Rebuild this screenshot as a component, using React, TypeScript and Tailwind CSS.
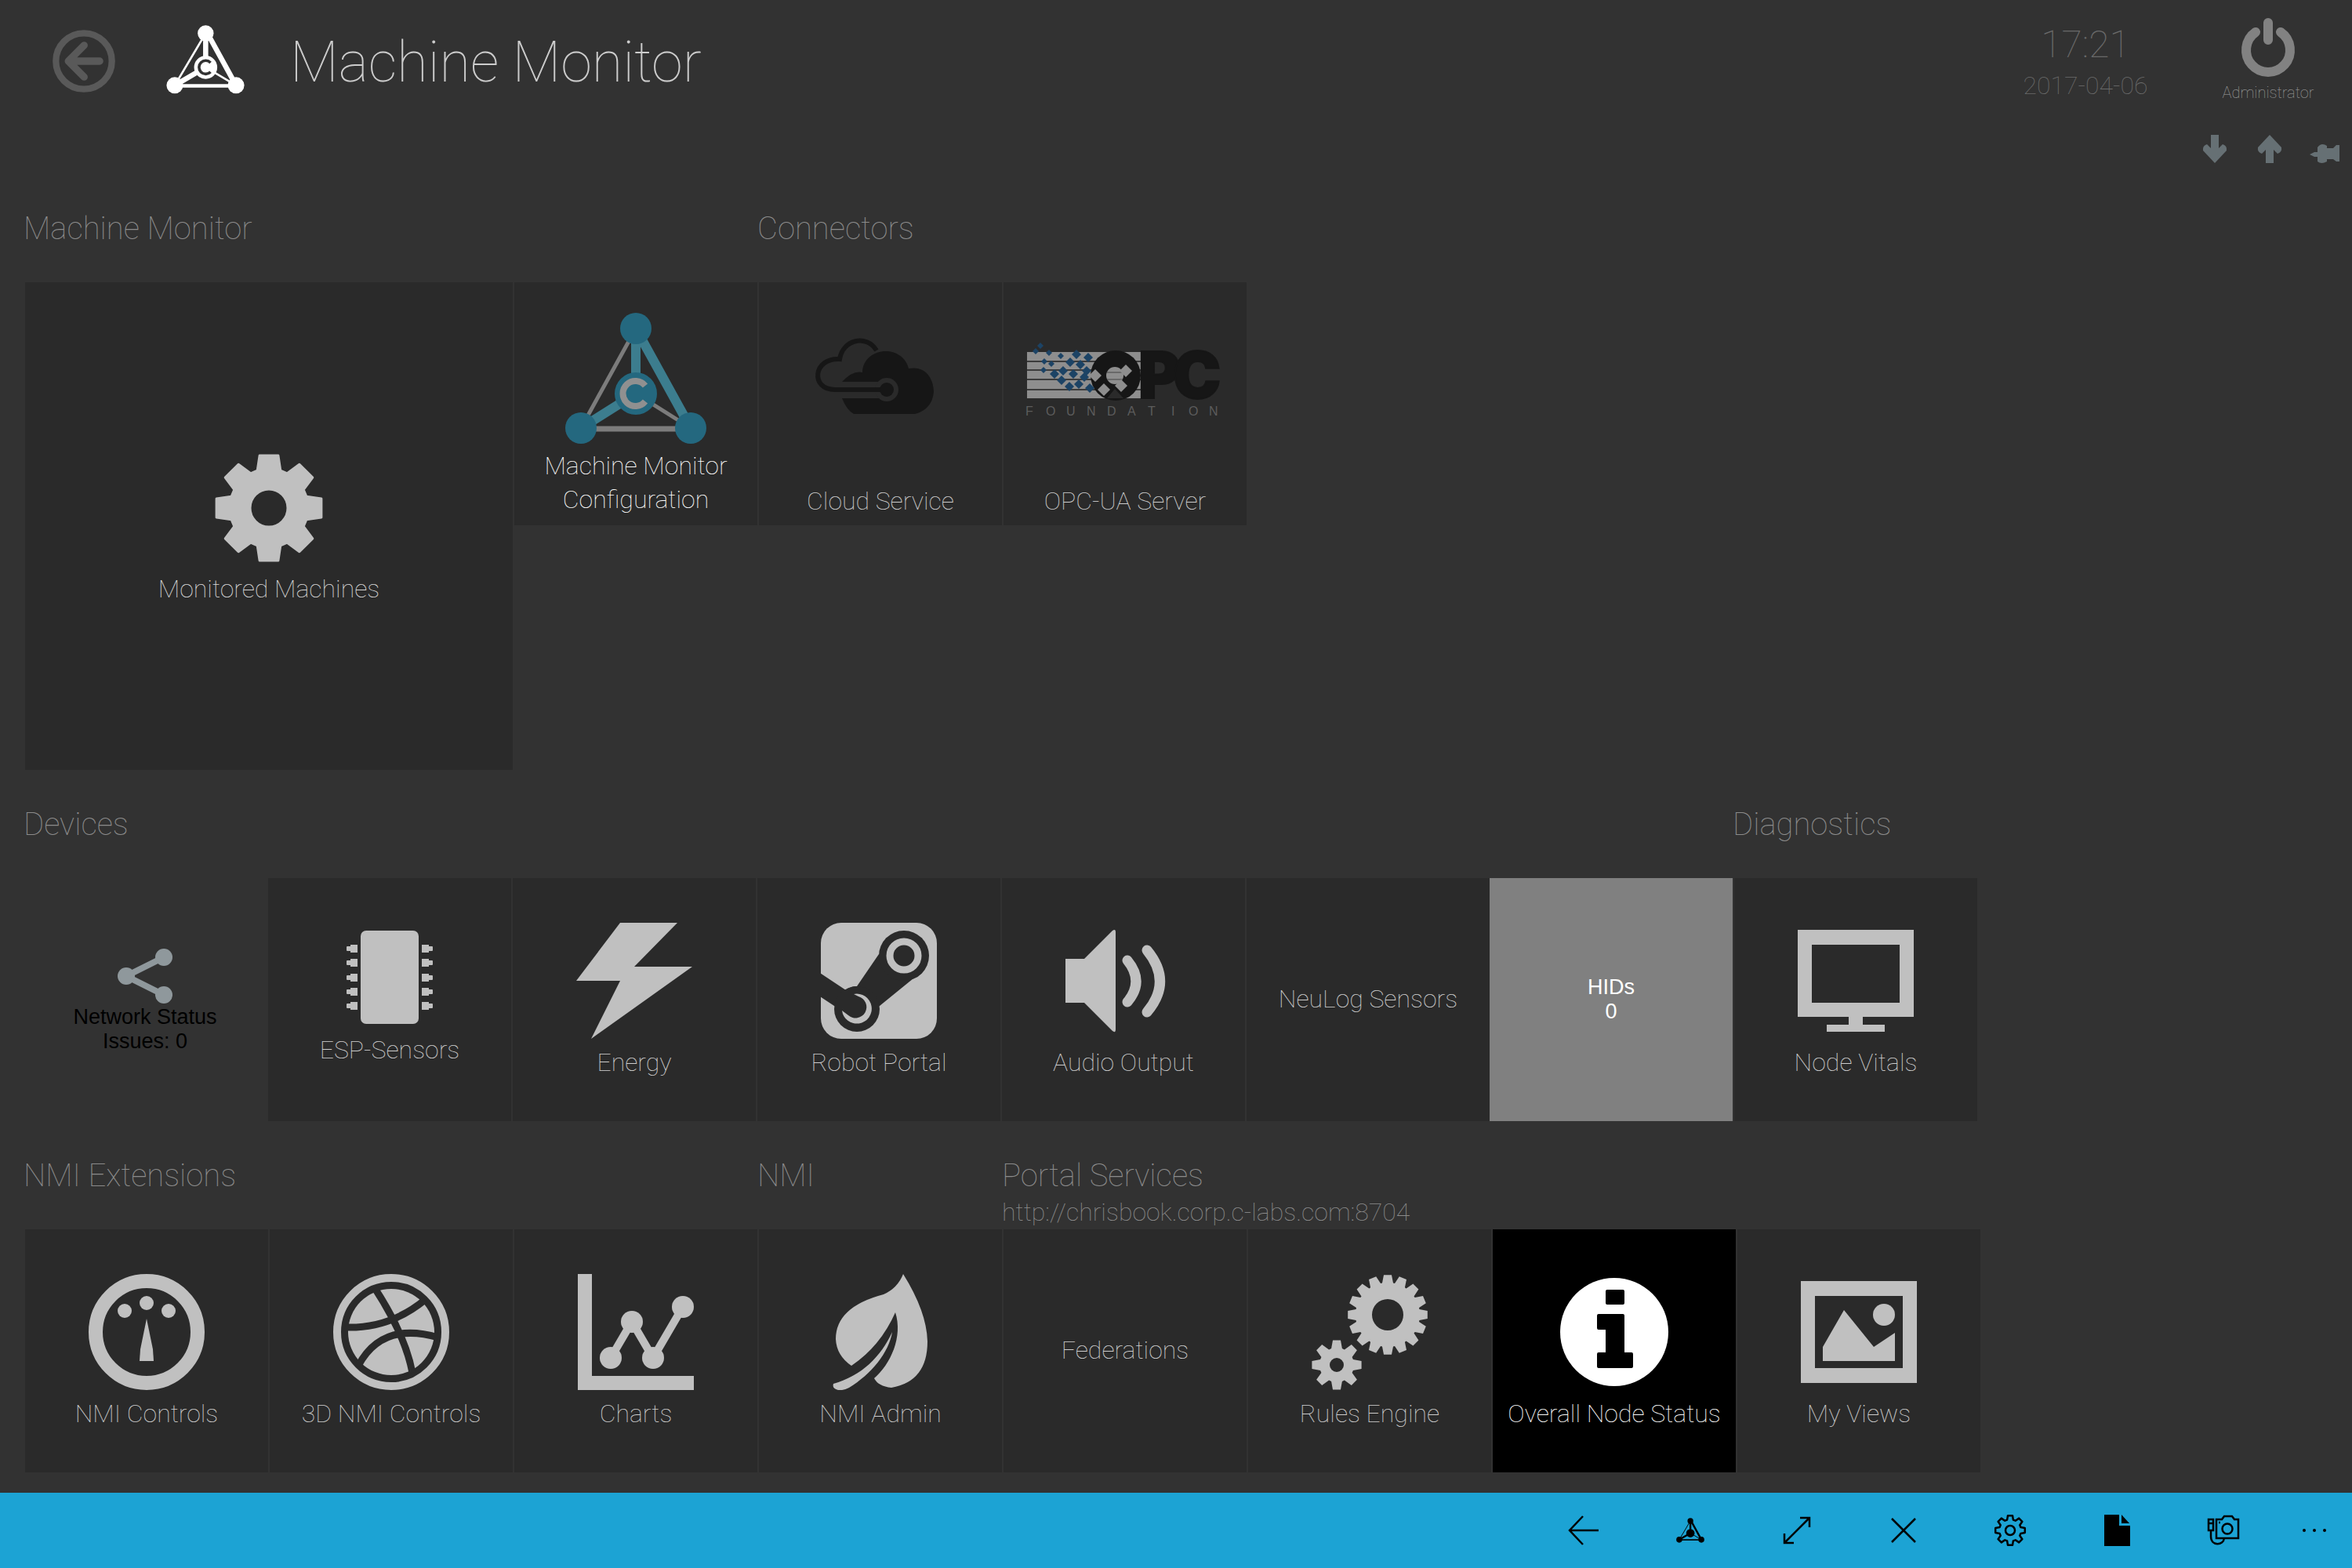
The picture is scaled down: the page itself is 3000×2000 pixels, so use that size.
// src/App.tsx
import type { ReactNode } from "react";
import { clsx } from "clsx";

const FG = "#c0c0c0";
const TILE = "#2a2a2a";

function gearPath(cx: number, cy: number, teeth: number, outer: number, body: number, tip: number, base: number) {
  const pts: string[] = [];
  for (let i = 0; i < teeth; i++) {
    const a = (i * 2 * Math.PI) / teeth - Math.PI / 2;
    for (const [r, half] of [[body, -base], [outer, -tip], [outer, tip], [body, base]]) {
      const t = a + half / r;
      pts.push(`${(cx + r * Math.cos(t)).toFixed(1)} ${(cy + r * Math.sin(t)).toFixed(1)}`);
    }
  }
  return `M${pts.join("L")}Z`;
}

function hole(cx: number, cy: number, r: number) {
  return `M${cx - r} ${cy}a${r} ${r} 0 1 0 ${2 * r} 0a${r} ${r} 0 1 0 ${-2 * r} 0Z`;
}

function Glyph({ children }: { children: ReactNode }) {
  return <svg viewBox="0 0 148 148" className="size-[148px]" fill={FG} aria-hidden="true">{children}</svg>;
}

const GearIcon = () => (
  <Glyph><path fillRule="evenodd" stroke={FG} strokeWidth={3} strokeLinejoin="round" d={gearPath(74, 75, 8, 68, 50, 12, 15) + hole(74, 75, 24)} /></Glyph>
);

const ChipIcon = () => (
  <svg viewBox="0 0 110 122" className="h-[122px] w-[110px]" fill={FG} aria-hidden="true">
    <rect x="18" width="74" height="119" rx="7" />
    {[23, 41, 60, 78, 96].map((y) => (
      <g key={y}>
        <rect x="5" y={y - 5} width="9" height="10" />
        <rect y={y - 3} width="6" height="6" rx="1" />
        <rect x="96" y={y - 5} width="9" height="10" />
        <rect x="104" y={y - 3} width="6" height="6" rx="1" />
      </g>
    ))}
  </svg>
);

const BoltIcon = () => <Glyph><path d="M56 0H129L74 56H148L19 148L56 74H0Z" /></Glyph>;

const SteamIcon = () => (
  <Glyph>
    <rect width="148" height="148" rx="26" />
    <g fill={TILE}>
      <path d="M-1 64L32 86Q38 81 46 81L74 40L118 71L75 106L46 122L17 106L-1 94Z" />
      <circle cx="106" cy="42" r="32" />
      <circle cx="46" cy="110" r="29" />
    </g>
    <circle cx="106" cy="42" r="18" fill="none" stroke={FG} strokeWidth="9" />
    <path d="M42 91A19 19 0 1 1 27 112L35 118A14 14 0 1 0 48 94Z" />
  </Glyph>
);

const AudioIcon = () => (
  <Glyph>
    <path d="M0 46H24L60 10Q64 7 64 12V136Q64 141 60 138L24 102H0Z" />
    <path d="M79 48Q101 75 79 101M104 35Q137 75 104 114" fill="none" stroke={FG} strokeWidth="13" strokeLinecap="round" />
  </Glyph>
);

const ScreenIcon = () => (
  <Glyph><path fillRule="evenodd" d="M0 9H148V120H83V130H111V139H37V130H65V120H0ZM18 28V102H130V28Z" /></Glyph>
);

const DashboardIcon = () => (
  <Glyph>
    <circle cx="74" cy="74" r="65" fill="none" stroke={FG} strokeWidth="18" />
    <circle cx="74" cy="37" r="9" />
    <circle cx="46" cy="47" r="9" />
    <circle cx="102" cy="47" r="9" />
    <path d="M74 57L82 96L83 111H65L66 96Z" />
  </Glyph>
);

const BallIcon = () => (
  <Glyph>
    <circle cx="74" cy="74" r="69" fill="none" stroke={FG} strokeWidth="10" />
    <circle cx="74" cy="74" r="55" />
    <path d="M53 18Q92 78 101 126M15 68Q72 70 117 33M32 117Q62 60 134 81" fill="none" stroke={TILE} strokeWidth="9" />
  </Glyph>
);

const ChartIcon = () => (
  <Glyph>
    <path d="M0 0H18V130H148V148H0Z" />
    <path d="M42 107L69 61L96 107L134 42" fill="none" stroke={FG} strokeWidth="10" />
    <circle cx="42" cy="107" r="14" />
    <circle cx="69" cy="61" r="14" />
    <circle cx="96" cy="107" r="14" />
    <circle cx="134" cy="42" r="14" />
  </Glyph>
);

const LeafIcon = () => (
  <Glyph>
    <path d="M103 0Q96 18 78 26Q17 42 17 83Q18 104 37 117Q74 92 93 49C103 80 87 115 66 133Q71 143 88 145Q134 137 134 86Q133 48 103 0Z" />
    <path d="M89 74C75 105 50 130 14 140Q12 146 20 148Q26 149 34 145C62 128 85 100 89 74Z" />
  </Glyph>
);

const CogsIcon = () => (
  <Glyph>
    <path fillRule="evenodd" d={gearPath(97, 52, 16, 51, 41, 5, 7) + hole(97, 52, 20)} />
    <path fillRule="evenodd" d={gearPath(32, 116, 8, 32, 22, 5, 7) + hole(32, 116, 9)} />
  </Glyph>
);

const InfoIcon = () => (
  <Glyph>
    <circle cx="74" cy="74" r="69" fill="#fff" />
    <g fill="#000">
      <rect x="63" y="20" width="24" height="19" rx="2" />
      <path d="M54 51H85Q87 51 87 53V100H96Q98 100 98 102V118Q98 120 96 120H54Q52 120 52 118V102Q52 100 54 100H63V71H54Q52 71 52 69V53Q52 51 54 51Z" />
    </g>
  </Glyph>
);

const PictureIcon = () => (
  <Glyph>
    <path fillRule="evenodd" d="M0 9H148V139H0ZM18 28V120H130V28Z" />
    <path d="M28 93L55 46L93 93L120 75V111H28Z" />
    <circle cx="106" cy="52" r="14" />
  </Glyph>
);

const ConfigLogo = () => (
  <svg viewBox="0 0 182 168" className="h-[168px] w-[182px]" fill="none" aria-hidden="true">
    <path d="M91 20L21 147M91 103L161 147" stroke="#7c7c7c" strokeWidth="5" />
    <path d="M21 148H161" stroke="#7c7c7c" strokeWidth="7" />
    <path d="M161 147L91 20V103L21 147" stroke="#3c7d8e" strokeWidth="12" />
    <g fill="#24687f">
      <circle cx="91" cy="20" r="20" />
      <circle cx="21" cy="147" r="20" />
      <circle cx="161" cy="147" r="20" />
      <circle cx="91" cy="103" r="27" />
    </g>
    <path d="M103 93A16 16 0 1 0 103 113" stroke="#909090" strokeWidth="8" />
  </svg>
);

const CloudLogo = () => (
  <svg viewBox="0 0 280 120" className="h-[120px] w-[280px]" fill="none" aria-hidden="true">
    <path d="M106 108Q97 103 91 88V67Q105 52 117 55C118 22 168 18 176 50C200 46 208 66 208 80Q206 102 184 108Z" fill="#161616" />
    <path d="M84 77.5H146" stroke={TILE} strokeWidth="21" />
    <circle cx="148" cy="77" r="15" fill={TILE} />
    <path d="M135 27C122 6 92 13 88 38C54 36 50 77 82 77H146" stroke="#161616" strokeWidth="6" />
    <circle cx="148" cy="77" r="9" fill="#161616" />
  </svg>
);

const BLUE = [
  [27, 21], [21, 28], [38, 30], [53, 34], [32, 41], [41, 44], [31, 52], [73, 32], [65, 42], [88, 36], [78, 45], [45, 57],
  [56, 53], [69, 57], [54, 65], [64, 73], [76, 70], [83, 61], [86, 53], [90, 75],
];
const LIGHT = [[97, 59], [108, 77], [130, 72], [136, 53]];

const OpcLogo = () => (
  <svg viewBox="0 0 270 120" className="h-[120px] w-[270px]" aria-hidden="true">
    <rect x="10" y="29" width="145" height="59" fill="#8e8e8e" />
    <path d="M10 41H155M10 52H155M10 64H155M10 77H155" stroke="#3c3c3c" strokeWidth="2" />
    <circle cx="123" cy="59" r="32" fill="#161616" />
    <circle cx="122" cy="59" r="11" fill="#8e8e8e" />
    <path d="M112 55H132M112 64H132" stroke="#444" strokeWidth="1" />
    <path d="M112 88L122 76L133 88Z" fill={TILE} />
    {LIGHT.map(([x, y]) => <path key={`${x}-${y}`} d={`M${x} ${y - 8}l8 8l-8 8l-8 -8Z`} fill="#8e8e8e" />)}
    {BLUE.map(([x, y], i) => (
      <path key={`${x}-${y}`} d={i < 7 ? `M${x} ${y - 4}l4 4l-4 4l-4 -4Z` : `M${x} ${y - 6}l6 6l-6 6l-6 -6Z`} fill="#1c4365" />
    ))}
    <text x="152 196" y="88" fill="#161616" stroke="#161616" strokeWidth="2" fontFamily="Inter, sans-serif" fontWeight={900} fontSize="82">PC</text>
    <text x="8 34 60 86 112 138 164 194 216 242" y="110" fill="#5c5c5c" fontFamily="Liberation Sans, sans-serif" fontSize="16">FOUNDATION</text>
  </svg>
);

function NodeLogo({ color, inner, className }: { color: string; inner?: string; className: string }) {
  return (
    <svg viewBox="484 34 304 268" className={className} fill="none" stroke={color} aria-hidden="true">
      <path d="M637 66L517 268M637 198L755 268" strokeWidth="8" />
      <path d="M517 270H755" strokeWidth="14" />
      <path d="M755 268L644 66M637 66V198L517 268" strokeWidth="20" />
      <g fill={color} stroke="none">
        <circle cx="637" cy="66" r="31" />
        <circle cx="517" cy="268" r="32" />
        <circle cx="755" cy="268" r="32" />
        <circle cx="637" cy="198" r="45" />
      </g>
      {inner && <path d="M656 180A26 26 0 1 0 656 216" stroke={inner} strokeWidth="11" />}
    </svg>
  );
}

const LABEL = "text-[32px] font-thin";

function Tile({ label, icon, className, labelClass = "mt-[14px] leading-8" }: {
  label: string; icon?: ReactNode; className?: string; labelClass?: string;
}) {
  return (
    <button
      type="button"
      className={clsx(
        "ml-[2px] flex shrink-0 flex-col items-center",
        className ?? "h-[310px] w-[310px] justify-center bg-[#2a2a2a] pb-[2px] text-[#cfcfcf]"
      )}
    >
      {icon}
      <span className={clsx(LABEL, icon ? labelClass : "leading-8")}>{label}</span>
    </button>
  );
}

function StatusTile({ className, icon, lines }: { className: string; icon?: ReactNode; lines: string[] }) {
  return (
    <button
      type="button"
      className={clsx("flex h-[310px] w-[310px] shrink-0 flex-col items-center justify-center font-['Liberation_Sans',Arial,sans-serif] text-[27px] leading-[31px]", className)}
    >
      {icon}
      {lines.map((l) => <span key={l}>{l}</span>)}
    </button>
  );
}

function Group({ title, subtitle, children }: { title: string; subtitle?: string; children: ReactNode }) {
  return (
    <section>
      <div className="h-[92px] text-[#8c8c8c]">
        <h2 className="text-[40px] leading-[48px] font-thin">{title}</h2>
        {subtitle && <p className="text-[32px] leading-[44px] font-thin">{subtitle}</p>}
      </div>
      <div className="flex items-start">{children}</div>
    </section>
  );
}

const ShareIcon = () => (
  <svg viewBox="0 0 72 76" className="h-[76px] w-[72px]" fill="#8f989c" aria-hidden="true">
    <path d="M60 15L12 39L60 63" fill="none" stroke="#8f989c" strokeWidth="8" />
    <circle cx="60" cy="15" r="11" />
    <circle cx="12" cy="39" r="11" />
    <circle cx="60" cy="63" r="11" />
  </svg>
);

function Header() {
  return (
    <header className="flex h-[140px] items-start">
      <button type="button" aria-label="Back" className="mt-[38px] ml-[67px]">
        <svg viewBox="50 53 242 242" className="size-[80px]" fill="none" stroke="#595959">
          <circle cx="171" cy="174" r="108" strokeWidth="25" />
          <path d="M172 113L111 174L172 235M111 174H232" strokeWidth="28" strokeLinecap="round" strokeLinejoin="round" />
        </svg>
      </button>
      <NodeLogo color="#fff" inner="#323232" className="mt-[32px] ml-[65px] h-[88px] w-[100px]" />
      <h1 className="mt-[38px] ml-[58px] text-[72px] leading-[84px] font-thin text-[#cccccc]">Machine Monitor</h1>
      <div className="mt-[29px] ml-auto flex w-[252px] flex-col items-center font-thin text-[#6a6a6a]">
        <time className="text-[48px] leading-[56px]">17:21</time>
        <time className="text-[32px] leading-[48px]">2017-04-06</time>
      </div>
      <button type="button" className="flex w-[214px] flex-col items-center pt-[20px] text-[#a0a0a0]">
        <svg viewBox="0 0 72 80" className="h-[80px] w-[72px]" fill="none" stroke="#828282" strokeWidth="12" strokeLinecap="round" aria-hidden="true">
          <path d="M20 21A28 28 0 1 0 52 21M36 9V31" />
        </svg>
        <span className="mt-[5px] text-[20px] leading-[26px] font-thin">Administrator</span>
      </button>
    </header>
  );
}

function ViewActions() {
  const actions = [
    { name: "Move down", d: "M15 0H25V17L30 12Q36 14 35 20L20 36L5 20Q4 14 10 12L15 17Z" },
    { name: "Move up", d: "M15 36H25V19L30 24Q36 22 35 16L20 0L5 16Q4 22 10 24L15 19Z" },
    { name: "Pin", d: "M1 25L7 22H11V16Q16 9 23 14V17H31L35 13H39V34H35L31 31H23V34Q16 38 11 34V28H7Z" },
  ];
  return (
    <div className="flex h-[100px] justify-end">
      {actions.map((a) => (
        <button key={a.name} type="button" aria-label={a.name} className="flex w-[70px] items-center justify-center">
          <svg viewBox="0 0 40 36" className="h-[36px] w-[40px]" fill="#667074"><path d={a.d} /></svg>
        </button>
      ))}
    </div>
  );
}

function Bar({ children }: { children: ReactNode }) {
  return (
    <svg viewBox="0 0 40 40" className="size-[40px] overflow-visible" fill="none" stroke="#000" strokeWidth="2.5" aria-hidden="true">{children}</svg>
  );
}

const TOOLS: { name: string; icon: ReactNode }[] = [
  { name: "Back", icon: <Bar><path d="M19 2L2 20L19 38M2 20H39" /></Bar> },
  { name: "Home", icon: <NodeLogo color="#000" className="h-[32px] w-[36px]" /> },
  { name: "Full screen", icon: <Bar><path d="M4 36L36 4M24 4H36V16M4 24V36H16" /></Bar> },
  { name: "Close", icon: <Bar><path d="M5 5L35 35M35 5L5 35" /></Bar> },
  { name: "Settings", icon: <Bar><path strokeLinejoin="round" d={gearPath(20, 20, 8, 19, 14, 3, 4)} /><circle cx="20" cy="20" r="6" /></Bar> },
  { name: "Document", icon: <Bar><path d="M4 0H23V14H37V40H4ZM26 0L36 11H26Z" fill="#000" stroke="none" /></Bar> },
  {
    name: "Camera",
    icon: (
      <Bar>
        <path d="M11 6H18L21 2H31L34 6H39V30H11Z" />
        <circle cx="25" cy="18" r="6.5" />
        <path d="M1 6H7V20H1ZM4 20V28C4 40 20 40 21 30M1 11H7M14 10H16" />
      </Bar>
    ),
  },
];

export default function App() {
  return (
    <div className="flex min-h-screen flex-col bg-[#323232] font-[Roboto,sans-serif]">
      <Header />
      <ViewActions />
      <main className="flex flex-col gap-[46px] pt-[28px] pb-[26px] pl-[30px]">
        <div className="flex items-start">
          <Group title="Machine Monitor">
            <Tile label="Monitored Machines" icon={<GearIcon />} className="h-[622px] w-[622px] justify-center bg-[#2a2a2a] pb-[2px] text-[#d8d8d8]" />
            <Tile
              label="Machine Monitor Configuration"
              icon={<ConfigLogo />}
              className="h-[310px] w-[310px] bg-[#2a2a2a] px-[30px] pt-[39px] text-white"
              labelClass="mt-[6px] leading-[43px]"
            />
          </Group>
          <Group title="Connectors">
            <Tile label="Cloud Service" icon={<CloudLogo />} className="h-[310px] w-[310px] bg-[#2a2a2a] pt-[60px] text-[#cfcfcf]" labelClass="mt-[83px] leading-8" />
            <Tile label="OPC-UA Server" icon={<OpcLogo />} className="h-[310px] w-[310px] bg-[#2a2a2a] pt-[60px] text-[#cfcfcf]" labelClass="mt-[83px] leading-8" />
          </Group>
        </div>
        <div className="flex items-start">
          <Group title="Devices">
            <StatusTile className="text-black" icon={<ShareIcon />} lines={["Network Status", "Issues: 0"]} />
            <Tile label="ESP-Sensors" icon={<ChipIcon />} className="h-[310px] w-[310px] justify-center bg-[#2a2a2a] pb-2 text-[#cfcfcf]" />
            <Tile label="Energy" icon={<BoltIcon />} />
            <Tile label="Robot Portal" icon={<SteamIcon />} />
            <Tile label="Audio Output" icon={<AudioIcon />} />
            <Tile label="NeuLog Sensors" />
            <StatusTile className="bg-[#808080] text-white" lines={["HIDs", "0"]} />
          </Group>
          <Group title="Diagnostics">
            <Tile label="Node Vitals" icon={<ScreenIcon />} />
          </Group>
        </div>
        <div className="flex items-start">
          <Group title="NMI Extensions">
            <Tile label="NMI Controls" icon={<DashboardIcon />} />
            <Tile label="3D NMI Controls" icon={<BallIcon />} />
            <Tile label="Charts" icon={<ChartIcon />} />
          </Group>
          <Group title="NMI">
            <Tile label="NMI Admin" icon={<LeafIcon />} />
          </Group>
          <Group title="Portal Services" subtitle="http://chrisbook.corp.c-labs.com:8704">
            <Tile label="Federations" />
            <Tile label="Rules Engine" icon={<CogsIcon />} />
            <Tile label="Overall Node Status" icon={<InfoIcon />} className="h-[310px] w-[310px] justify-center bg-black pb-[2px] text-white" />
            <Tile label="My Views" icon={<PictureIcon />} />
          </Group>
        </div>
      </main>
      <footer className="mt-auto flex h-[96px] justify-end bg-[#1ca3d4]">
        {TOOLS.map((t) => (
          <button key={t.name} type="button" aria-label={t.name} className="flex w-[136px] items-center justify-center">{t.icon}</button>
        ))}
        <button type="button" aria-label="More" className="flex w-[96px] items-center justify-center gap-[9px]">
          <span className="size-1 rounded-full bg-black" />
          <span className="size-1 rounded-full bg-black" />
          <span className="size-1 rounded-full bg-black" />
        </button>
      </footer>
    </div>
  );
}
